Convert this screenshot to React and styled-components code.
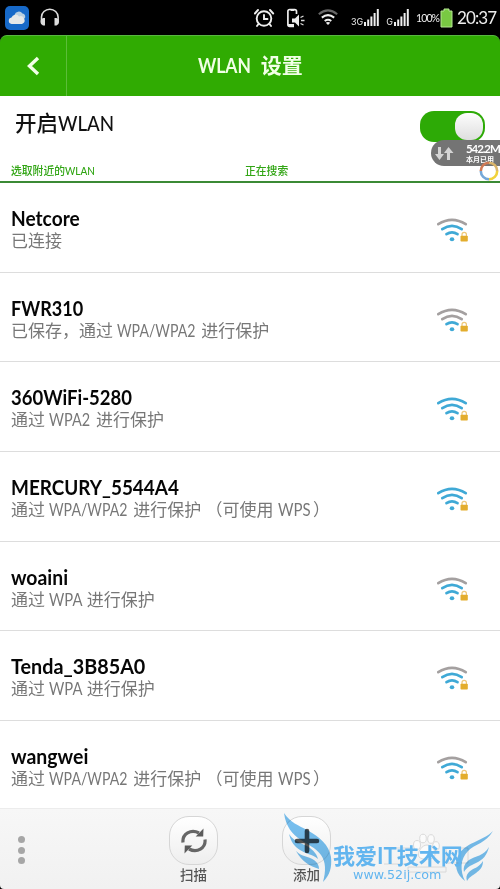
import React, { useState } from "react";
import styled, { createGlobalStyle } from "styled-components";

const GlobalStyle = createGlobalStyle`
  * { box-sizing: border-box; }
  body { margin: 0; background: #000; }
  svg { display: block; }
`;

const NETWORKS = [
  { name: "Netcore", info: "已连接", level: 2, fit: 0.89 },
  { name: "FWR310", info: "已保存，通过 WPA/WPA2 进行保护", level: 1, fit: 0.84 },
  { name: "360WiFi-5280", info: "通过 WPA2 进行保护", level: 3, fit: 0.86 },
  { name: "MERCURY_5544A4", info: "通过 WPA/WPA2 进行保护 （可使用 WPS）", level: 3, fit: 0.88 },
  { name: "woaini", info: "通过 WPA 进行保护", level: 2, fit: 0.9 },
  { name: "Tenda_3B85A0", info: "通过 WPA 进行保护", level: 2, fit: 0.92 },
  { name: "wangwei", info: "通过 WPA/WPA2 进行保护 （可使用 WPS）", level: 2, fit: 0.905 },
];

/* Horizontal scale and the space it frees, per latin word */
const LATIN = {
  "WPA/WPA2": { fit: 0.83, pull: 15 },
  WPA2: { fit: 0.85, pull: 6 },
  WPA: { fit: 0.87, pull: 5.5 },
  WPS: { fit: 0.88, pull: 2 },
};

/* ── Layout ────────────────────────────────────────────── */
const Screen = styled.div`
  position: relative;
  display: flex;
  flex-direction: column;
  width: 500px;
  height: 889px;
  overflow: hidden;
  background: #000;
  font-family: Lato, "Noto Sans CJK SC", sans-serif;
`;

/* Condensed text, anchored to its own left edge */
const Text = styled.span`
  display: inline-block;
  margin-right: ${({ $pull }) => -($pull || 0)}px;
  white-space: pre;
  transform: scaleX(${({ $fit }) => $fit || 1});
  transform-origin: left center;
`;

const StatusBar = styled.div`
  flex: none;
  display: flex;
  align-items: center;
  height: 35px;
  padding: 0 5px;
  color: #eee;
`;

const StatusSide = styled.div`
  display: flex;
  align-items: center;
  gap: 10px;
  margin-right: auto;
`;

const StatusIcons = styled.div`
  display: flex;
  align-items: center;
  gap: 11px;
`;

const Clock = styled.span`
  width: 38px;
  margin-left: 4px;
  font: 17px/35px Lato, sans-serif;
  letter-spacing: -0.9px;
  white-space: nowrap;
`;

const Percent = styled.span`
  width: 24px;
  margin-left: 7px;
  font: 10.5px/32px Lato, sans-serif;
  letter-spacing: -0.9px;
  white-space: nowrap;
`;

const NetType = styled.span`
  margin: 9px 1px 0 ${({ $gap }) => $gap}px;
  font: 9px/10px Inter, sans-serif;
`;

const Header = styled.header`
  flex: none;
  display: flex;
  height: 61px;
  border-radius: 7px 7px 0 0;
  border-top: 1px solid #58b840;
  background: #30ab02;
  color: #f1ffe6;
`;

const BackButton = styled.button`
  display: flex;
  align-items: center;
  justify-content: center;
  width: 67px;
  padding: 0;
  border: 0;
  border-right: 1px solid #5cbd39;
  background: none;
  color: inherit;
`;

const Title = styled.h1`
  flex: 1;
  margin: 0;
  padding-left: 131px;
  font-size: 21px;
  font-weight: 700;
  line-height: 58px;
`;

const Panel = styled.section`
  flex: none;
  display: flex;
  flex-direction: column;
  height: 87px;
  border-bottom: 2px solid #3b8a35;
  background: #fff;
`;

const SwitchRow = styled.div`
  display: flex;
  align-items: flex-start;
  justify-content: space-between;
  height: 62px;
  padding: 15px 15px 0;
  color: #111;
  font-size: 21.5px;
  font-weight: 500;
  line-height: 24px;
`;

const Switch = styled.button`
  display: flex;
  justify-content: ${({ $on }) => ($on ? "flex-end" : "flex-start")};
  width: 65px;
  height: 31px;
  padding: 2px;
  border: 0;
  border-radius: 14px;
  background: ${({ $on }) => ($on ? "#2daa06" : "#bbb")};
`;

const Knob = styled.span`
  width: 28px;
  height: 27px;
  border-radius: 12px;
  background: linear-gradient(#fdfdfd, #dedede);
`;

const Captions = styled.div`
  display: grid;
  grid-template-columns: 234px 1fr;
  padding: 4px 11px 0;
  color: #31a514;
  font-size: 10.8px;
  font-weight: 500;
  line-height: 17px;
`;

const List = styled.ul`
  flex: none;
  height: 625px;
  margin: 0;
  padding: 0;
  overflow: hidden;
  list-style: none;
  background: #fff;
`;

const Row = styled.li`
  display: flex;
  align-items: flex-start;
  justify-content: space-between;
  height: 89.7px;
  padding: 23px 31px 0 11px;
  border-bottom: 1px solid #ddd;
`;

const Name = styled.div`
  color: #060606;
  font-size: 21.5px;
  font-weight: 700;
  line-height: 25px;
`;

const Info = styled.div`
  color: #777;
  font-size: 17px;
  line-height: 20px;
  white-space: pre;
`;

const SignalBox = styled.div`
  padding-top: 12px;
`;

const Toolbar = styled.footer`
  flex: none;
  display: flex;
  height: 81px;
  border-top: 1px solid #ececec;
  border-radius: 0 0 4px 4px;
  background: linear-gradient(#f7f7f7, #f1f1f1);
`;

const MoreButton = styled.div`
  display: flex;
  flex-direction: column;
  gap: 3.5px;
  width: 137px;
  padding: 27px 0 0 18px;
`;

const Dot = styled.i`
  width: 7px;
  height: 7px;
  border-radius: 50%;
  background: #a6a6a6;
`;

const Action = styled.div`
  display: flex;
  flex-direction: column;
  align-items: center;
  width: 113px;
  padding-top: 7px;
  color: #555;
  font-size: 13.5px;
  font-weight: 500;
  line-height: 20px;
`;

const ActionFace = styled.span`
  display: flex;
  align-items: center;
  justify-content: center;
  width: 49px;
  height: 49px;
  border: 1px solid #d6d6d6;
  border-radius: 20px;
  background: linear-gradient(#fff, #eee);
`;

/* ── Floating parts ────────────────────────────────────── */
const TrafficBadge = styled.div`
  position: absolute;
  top: 140px;
  right: 0;
  display: flex;
  align-items: center;
  gap: 12px;
  width: 69px;
  height: 26px;
  padding-left: 4px;
  border-radius: 13px 0 0 13px;
  background: #747474;
  color: #fff;

  svg { flex: none; }
`;

const TrafficText = styled.div`
  display: flex;
  flex-direction: column;
  font: 700 11.5px/13px Lato, "Noto Sans CJK SC", sans-serif;
  letter-spacing: -1.1px;
  white-space: nowrap;
`;

const TrafficNote = styled.small`
  font-size: 7px;
  line-height: 9px;
  letter-spacing: 0;
`;

const Ring = styled.div`
  position: absolute;
  top: 161px;
  right: 1px;
`;

const Watermark = styled.div`
  position: absolute;
  left: 250px;
  top: 800px;
`;

const WingLayer = styled(Watermark)`
  mix-blend-mode: multiply;
`;

const Brand = styled.div`
  position: absolute;
  left: 83px;
  top: 45px;
  color: #62b5ef;
  font: 700 22px/22px Lato, "Noto Sans CJK SC", sans-serif;
  white-space: nowrap;
`;

const BrandUrl = styled(Brand)`
  left: 103px;
  top: 69px;
  font: 12.7px/12px "DejaVu Sans", sans-serif;
`;

/* ── Icons ─────────────────────────────────────────────── */
const CloudIcon = () => (
  <svg width="24" height="24" viewBox="0 0 24 24">
    <rect width="24" height="24" rx="5" fill="#1769c8" />
    <path d="M10 14a4 4 0 0 1-.5-5 4.500 4.500 0 0 1 8-1.500 3 3 0 0 1 2 5z" fill="#b9cfe0" />
    <path d="M6.500 18a3.300 3.300 0 0 1 0-6.500A4.200 4.200 0 0 1 14 10.500a3.800 3.800 0 0 1 3 7.500z" fill="#e6e8e8" />
  </svg>
);

const HeadphoneIcon = () => (
  <svg width="22" height="20" viewBox="0 0 22 20">
    <path d="M2.500 13V9a8.300 7.800 0 0 1 16.600 0v4" fill="none" stroke="#ddd" strokeWidth="1.6" />
    <path d="M6 10v7.500H4A4 4 0 0 1 4 10zM15.500 10v7.500h2a4 4 0 0 0 0-7.500z" fill="#ddd" />
  </svg>
);

const AlarmIcon = () => (
  <svg width="22" height="20" viewBox="0 0 22 20" fill="none" stroke="#eee" strokeWidth="1.9" strokeLinecap="round">
    <circle cx="10" cy="10.500" r="7.300" />
    <path d="M10 7v4h3.500M.9 5.500 4 2M19.200 5.500 16 2M4.500 16 3 18M15.500 16l1.500 2" />
  </svg>
);

const PhoneSoundIcon = () => (
  <svg width="20" height="20" viewBox="0 0 20 20">
    <path d="M9.500 6V3.500A1.800 1.800 0 0 0 7.700 1.500h-5A1.800 1.800 0 0 0 .9 3.500v13a1.800 1.800 0 0 0 1.800 1.800H7" fill="none" stroke="#eee" strokeWidth="1.7" />
    <path d="M1 16h6v2H1zM3.500 1h4v2h-4zM5 10.500h3l4-4v12l-4-4H5z" fill="#eee" />
    <path d="m13.500 9.500 3-1.500M14 12.500h3.500M13.500 15.500l3 1.500" stroke="#ddd" strokeWidth="1.3" />
  </svg>
);

const StatusWifi = () => (
  <svg width="20" height="17" viewBox="0 0 20 17" fill="none" strokeWidth="2">
    <path d="M.8 5.200Q10-2.500 19.200 5.200" stroke="#666" />
    <path d="M3.800 8.600q6.200-5 12.400 0M6.700 12q3.300-2.500 6.600 0" stroke="#eee" />
    <path d="m10 16-2.200-2.300q2.200-1.300 4.400 0z" fill="#eee" />
  </svg>
);

const Bars = () => (
  <svg width="15" height="17" viewBox="0 0 15 17" fill="#eee">
    <path d="M0 13h2v4H0zM3.200 10.500h2V17h-2zM6.400 7.500h2V17h-2zM9.600 4h2v13h-2zM12.800 0h2v17h-2z" />
  </svg>
);

const BatteryIcon = () => (
  <svg width="13" height="20" viewBox="0 0 13 20">
    <path d="M4 1h5v2h3v16H1V3h3z" fill="#79c943" stroke="#b6e894" />
  </svg>
);

const WIFI_ARCS = [
  "M9.500 16.200q5.500-3.600 11 0",
  "M5.300 11.200q9.700-6.800 19.400 0",
  "M1.300 6.200q13.700-8.600 27.400 0",
];

const Signal = ({ level }) => (
  <svg width="32" height="26" viewBox="0 0 32 26" fill="none">
    {WIFI_ARCS.map((d, i) => (
      <path key={d} d={d} stroke={i < level ? "#3fa9d6" : "#a4a0a0"} strokeWidth="2.7" strokeLinecap="round" />
    ))}
    <ellipse cx="15" cy="21.300" rx="2.300" ry="2" fill="#3fa9d6" />
    <path d="M25 18v-1.500a2.200 2.200 0 0 1 4.400 0V18" stroke="#efc878" strokeWidth="1.2" />
    <rect x="23.500" y="17.700" width="7.300" height="5.800" rx=".8" fill="#e3ad2d" />
  </svg>
);

const ScanIcon = () => (
  <svg width="26" height="26" viewBox="0 0 26 26" fill="none" stroke="#666" strokeWidth="3.2">
    <path d="M2 14.500C1 6 10 .5 18 5M24 11.500C25 20 16 25.500 8 21" />
    <path d="m22.500.5-.3 8h-7.500zM3.500 25.500l.3-8h7.500z" fill="#5b5b5b" stroke="none" />
  </svg>
);

const PlusIcon = () => (
  <svg width="26" height="26" viewBox="0 0 26 26" stroke="#505050" strokeWidth="4.6" strokeLinecap="round">
    <path d="M13 3v20M3 13h20" />
  </svg>
);

const Wings = () => (
  <svg width="250" height="89" viewBox="0 0 250 89" fill="#68b9ee" fillOpacity=".9">
    <path d="M34 13c7 10 14 12 23 17 13 7 22 15 24 27 1 10-1 18-8 25 3-11 3-20-2-27-6-8-13-10-20-15C42 34 36 27 34 13z" />
    <path d="M39 34c6 9 14 9 21 14 5 4 7 7 8 11-6-5-12-5-18-9-6-4-9-8-11-16z" />
    <path d="M46 51c6 6 12 5 18 9 4 3 5 6 5 9-9-3-17-7-23-18z" />
    <path d="M243 31c-7 12-18 13-25 20-8 8-8 20-3 30-9-7-11-16-7-25 7-14 24-14 35-25z" />
    <path d="M239 47c-5 9-14 9-20 13-4 3-6 7-5 12 3-5 6-6 12-9 7-3 11-8 13-16z" />
    <path d="M233 61c-4 7-10 7-14 11-3 3-3 6-2 9 2-4 5-5 9-8 4-3 7-6 7-12z" />
  </svg>
);

const Paw = () => (
  <svg width="250" height="89" viewBox="0 0 250 89" fill="#fbfbfb" stroke="#d6d6d6" strokeWidth=".9">
    <ellipse cx="167" cy="45" rx="3.500" ry="4.500" />
    <ellipse cx="173" cy="38.500" rx="3.300" ry="4.300" />
    <ellipse cx="181" cy="39" rx="3.300" ry="4.300" />
    <ellipse cx="186" cy="46" rx="3.300" ry="4.300" />
    <path d="M177 45c6 0 10 8 7 12-3 3-12 3-15 0-2-5 3-12 8-12z" />
    <path d="M134 48h26M134 64h23M196 48h22v15h-22zM158 67h38v5h-38z" fill="none" />
  </svg>
);

const InfoLine = ({ text }) => (
  <Info>
    {text.split(/([A-Z][A-Z0-9/]+)/).map((part, i) =>
      LATIN[part] ? (
        <Text key={i} $fit={LATIN[part].fit} $pull={LATIN[part].pull}>{part}</Text>
      ) : (
        part
      )
    )}
  </Info>
);

export default function App() {
  const [enabled, setEnabled] = useState(true);

  return (
    <Screen>
      <GlobalStyle />
      <StatusBar>
        <StatusSide>
          <CloudIcon />
          <HeadphoneIcon />
        </StatusSide>
        <StatusIcons>
          <AlarmIcon />
          <PhoneSoundIcon />
          <StatusWifi />
        </StatusIcons>
        <NetType $gap={13}>3G</NetType>
        <Bars />
        <NetType $gap={7}>G</NetType>
        <Bars />
        <Percent>100%</Percent>
        <BatteryIcon />
        <Clock>20:37</Clock>
      </StatusBar>

      <Header>
        <BackButton aria-label="返回">
          <svg width="14" height="20" viewBox="0 0 14 20" fill="none" stroke="currentColor" strokeWidth="3.4">
            <path d="m12 2-8.500 8 8.500 8" />
          </svg>
        </BackButton>
        <Title><Text $fit={0.83} $pull={6}>WLAN</Text> 设置</Title>
      </Header>

      <Panel>
        <SwitchRow>
          <div>开启<Text $fit={0.87}>WLAN</Text></div>
          <Switch $on={enabled} onClick={() => setEnabled(!enabled)}>
            <Knob />
          </Switch>
        </SwitchRow>
        <Captions>
          <div>选取附近的<Text $fit={0.92}>WLAN</Text></div>
          <div>正在搜索</div>
        </Captions>
      </Panel>

      <List>
        {NETWORKS.map((net) => (
          <Row key={net.name}>
            <div>
              <Name><Text $fit={net.fit}>{net.name}</Text></Name>
              <InfoLine text={net.info} />
            </div>
            <SignalBox><Signal level={net.level} /></SignalBox>
          </Row>
        ))}
      </List>

      <Toolbar>
        <MoreButton><Dot /><Dot /><Dot /></MoreButton>
        <Action>
          <ActionFace><ScanIcon /></ActionFace>
          扫描
        </Action>
        <Action>
          <ActionFace><PlusIcon /></ActionFace>
          添加
        </Action>
      </Toolbar>

      <TrafficBadge>
        <svg width="19" height="15" viewBox="0 0 19 15" fill="#d4d4d4">
          <path d="M3 1h3v7h3l-4.500 6L0 8h3zM12 14h3V7h3.500L13.500 1 9 7h3z" />
        </svg>
        <TrafficText>
          542.2M
          <TrafficNote>本月已用</TrafficNote>
        </TrafficText>
      </TrafficBadge>
      <Ring>
        <svg width="20" height="20" viewBox="0 0 20 20" fill="none" strokeWidth="2.6">
          <path d="M10 1.800A8.200 8.200 0 0 1 18.200 10" stroke="#dbb56a" />
          <path d="M18.200 10A8.200 8.200 0 0 1 10 18.200" stroke="#f1d23b" />
          <path d="M10 18.200A8.200 8.200 0 0 1 1.800 10" stroke="#75a8d8" />
          <path d="M1.800 10A8.200 8.200 0 0 1 10 1.800" stroke="#d07a55" />
        </svg>
      </Ring>

      <Watermark><Paw /></Watermark>
      <WingLayer><Wings /></WingLayer>
      <Watermark>
        <Brand>我爱IT技术网</Brand>
        <BrandUrl>www.52ij.com</BrandUrl>
      </Watermark>
    </Screen>
  );
}
